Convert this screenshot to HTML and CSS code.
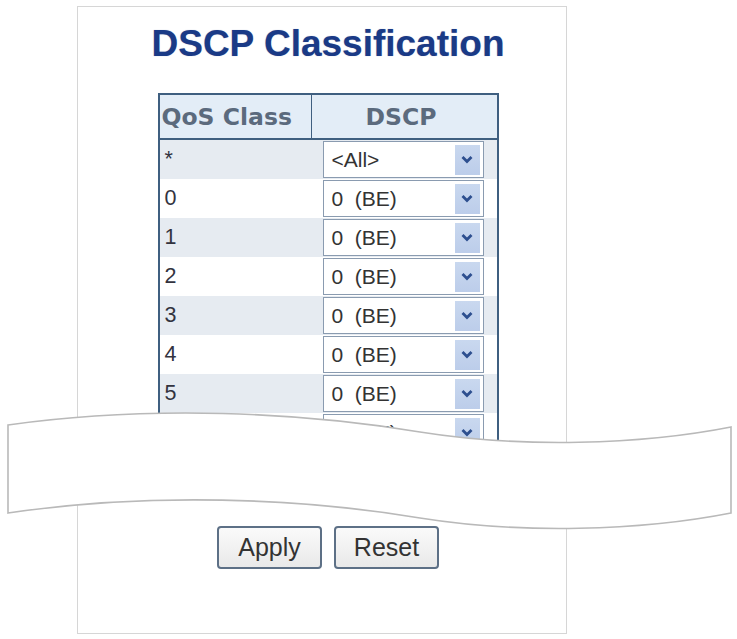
FILE: index.html
```html
<!DOCTYPE html>
<html>
<head>
<meta charset="utf-8">
<link rel="stylesheet" href="styles.css">
</head>
<body>
<div class="panel">
  <h1 class="title">DSCP Classification</h1>
  <table class="config">
    <thead>
      <tr><th class="col-class">QoS Class</th><th class="col-dscp">DSCP</th></tr>
    </thead>
    <tbody>
      <tr class="odd"><td class="cls">*</td><td class="dscp"><div class="select"><span class="val">&lt;All&gt;</span><span class="arrow"><svg width="12" height="9" viewBox="0 0 12 9"><polyline points="1.5,2 6,6.5 10.5,2" fill="none" stroke="#2d4f8f" stroke-width="2.8"/></svg></span></div></td></tr>
      <tr class="even"><td class="cls">0</td><td class="dscp"><div class="select"><span class="val">0&nbsp;&nbsp;(BE)</span><span class="arrow"><svg width="12" height="9" viewBox="0 0 12 9"><polyline points="1.5,2 6,6.5 10.5,2" fill="none" stroke="#2d4f8f" stroke-width="2.8"/></svg></span></div></td></tr>
      <tr class="odd"><td class="cls">1</td><td class="dscp"><div class="select"><span class="val">0&nbsp;&nbsp;(BE)</span><span class="arrow"><svg width="12" height="9" viewBox="0 0 12 9"><polyline points="1.5,2 6,6.5 10.5,2" fill="none" stroke="#2d4f8f" stroke-width="2.8"/></svg></span></div></td></tr>
      <tr class="even"><td class="cls">2</td><td class="dscp"><div class="select"><span class="val">0&nbsp;&nbsp;(BE)</span><span class="arrow"><svg width="12" height="9" viewBox="0 0 12 9"><polyline points="1.5,2 6,6.5 10.5,2" fill="none" stroke="#2d4f8f" stroke-width="2.8"/></svg></span></div></td></tr>
      <tr class="odd"><td class="cls">3</td><td class="dscp"><div class="select"><span class="val">0&nbsp;&nbsp;(BE)</span><span class="arrow"><svg width="12" height="9" viewBox="0 0 12 9"><polyline points="1.5,2 6,6.5 10.5,2" fill="none" stroke="#2d4f8f" stroke-width="2.8"/></svg></span></div></td></tr>
      <tr class="even"><td class="cls">4</td><td class="dscp"><div class="select"><span class="val">0&nbsp;&nbsp;(BE)</span><span class="arrow"><svg width="12" height="9" viewBox="0 0 12 9"><polyline points="1.5,2 6,6.5 10.5,2" fill="none" stroke="#2d4f8f" stroke-width="2.8"/></svg></span></div></td></tr>
      <tr class="odd"><td class="cls">5</td><td class="dscp"><div class="select"><span class="val">0&nbsp;&nbsp;(BE)</span><span class="arrow"><svg width="12" height="9" viewBox="0 0 12 9"><polyline points="1.5,2 6,6.5 10.5,2" fill="none" stroke="#2d4f8f" stroke-width="2.8"/></svg></span></div></td></tr>
      <tr class="even"><td class="cls">6</td><td class="dscp"><div class="select"><span class="val">0&nbsp;&nbsp;(BE)</span><span class="arrow"><svg width="12" height="9" viewBox="0 0 12 9"><polyline points="1.5,2 6,6.5 10.5,2" fill="none" stroke="#2d4f8f" stroke-width="2.8"/></svg></span></div></td></tr>
      <tr class="odd"><td class="cls">7</td><td class="dscp"><div class="select"><span class="val">0&nbsp;&nbsp;(BE)</span><span class="arrow"><svg width="12" height="9" viewBox="0 0 12 9"><polyline points="1.5,2 6,6.5 10.5,2" fill="none" stroke="#2d4f8f" stroke-width="2.8"/></svg></span></div></td></tr>
    </tbody>
  </table>
  <div class="buttons">
    <button class="btn">Apply</button>
    <button class="btn">Reset</button>
  </div>
</div>
<svg class="break" width="737" height="639" viewBox="0 0 737 639">
  <path d="M8,425 C150,405 300,412 420,432 C520,448 640,445 731,427 L731,513 C640,531 520,534 420,518 C300,498 150,492 8,513 Z" fill="#ffffff" stroke="#b9b9b9" stroke-width="1.6"/>
</svg>
</body>
</html>
```

FILE: styles.css
```css
html, body {
  margin: 0;
  padding: 0;
  background: #ffffff;
}

body {
  position: relative;
  width: 737px;
  height: 639px;
  overflow: hidden;
  font-family: "Liberation Sans", Arial, sans-serif;
}

.panel {
  box-sizing: border-box;
  width: 490px;
  height: 628px;
  margin: 6px 0 0 77px;
  border: 1px solid #d6d6d6;
  padding: 15px 0 0 12px;
  display: flex;
  flex-direction: column;
  align-items: center;
}

.title {
  margin: 0;
  font-family: "Liberation Sans", Arial, sans-serif;
  font-weight: bold;
  font-size: 37px;
  line-height: 44px;
  color: #1a3a86;
  text-shadow: 0 0 1px rgba(26, 58, 134, 0.4);
}

.config {
  margin-top: 27px;
  width: 341px;
  border: 2px solid #3f5f80;
  border-collapse: separate;
  border-spacing: 0;
  table-layout: fixed;
}

.config th {
  height: 43px;
  padding: 0;
  background: #e3edf7;
  border-bottom: 2px solid #3f5f80;
  font-family: "DejaVu Sans", Verdana, sans-serif;
  font-weight: bold;
  font-size: 23.5px;
  color: #5b6a7d;
  overflow: hidden;
  white-space: nowrap;
}

.col-class {
  width: 149px;
  border-right: 1px solid #3f5f80;
  text-align: left;
  padding-left: 2px !important;
}

.col-dscp {
  width: 179px;
  text-align: center;
  padding-right: 6px !important;
}

.config td {
  height: 39px;
  padding: 0;
  vertical-align: middle;
}

.config tr.odd td {
  background: #e6ebf1;
}

.config tr.even td {
  background: #ffffff;
}

.cls {
  padding-left: 5px !important;
  font-size: 21.5px;
  color: #33333f;
}

.select {
  box-sizing: border-box;
  width: 161px;
  height: 37px;
  margin-left: 11px;
  border: 1px solid #8a9bb0;
  background: #ffffff;
  display: flex;
  align-items: center;
  justify-content: space-between;
}

.val {
  padding-left: 8px;
  font-size: 21px;
  color: #333333;
  white-space: nowrap;
}

.arrow {
  width: 25px;
  height: 30px;
  margin-right: 3px;
  background: linear-gradient(#c9d8ef, #bccdea);
  display: flex;
  align-items: center;
  justify-content: center;
}

.buttons {
  margin-top: 33px;
  display: flex;
  gap: 12px;
}

.btn {
  box-sizing: border-box;
  width: 105px;
  height: 43px;
  padding: 0;
  border: 2px solid #5d7086;
  border-radius: 4px;
  background: linear-gradient(#fafafa, #e9e9e9);
  font-family: "Liberation Sans", Arial, sans-serif;
  font-size: 25px;
  color: #333333;
}

.break {
  position: absolute;
  left: 0;
  top: 0;
  pointer-events: none;
}
```
